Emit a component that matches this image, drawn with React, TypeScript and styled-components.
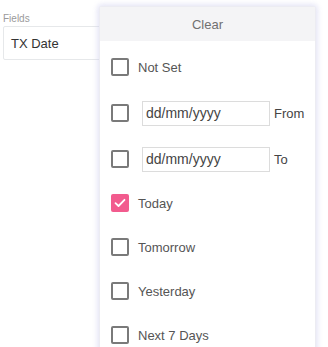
import styled, { createGlobalStyle } from "styled-components";

const GlobalStyle = createGlobalStyle`
  html, body {
    margin: 0;
    padding: 0;
    background: #ffffff;
    font-family: "Liberation Sans", Arial, sans-serif;
    overflow: hidden;
  }
`;

const Page = styled.div`
  position: relative;
  width: 328px;
  height: 347px;
  overflow: hidden;
`;

const Field = styled.div`
  padding: 13px 0 0 3px;
  display: flex;
  flex-direction: column;
`;

const FieldLabel = styled.div`
  font-size: 10px;
  line-height: 12px;
  color: #9a9a9a;
  margin-bottom: 1px;
`;

const FieldBox = styled.div`
  width: 140px;
  height: 32px;
  border: 1px solid #e6e8ea;
  border-radius: 2px;
  display: flex;
  align-items: center;
  padding-left: 7px;
  font-size: 13px;
  color: #333;
`;

const Dropdown = styled.div`
  position: absolute;
  left: 99px;
  top: 6px;
  width: 217px;
  height: 360px;
  background: #fff;
  border: 1px solid #ececf2;
  border-radius: 3px;
  box-shadow: 0 0 5px 2px rgba(200, 200, 235, 0.45);
  box-sizing: border-box;
`;

const Header = styled.div`
  height: 34px;
  background: #f4f4f6;
  display: flex;
  align-items: center;
  justify-content: center;
  font-size: 13px;
  color: #707070;
`;

const List = styled.div`
  padding-top: 4px;
  display: flex;
  flex-direction: column;
`;

const Row = styled.div<{ tall?: boolean }>`
  height: ${(p) => (p.tall ? "48px" : "44px")};
  display: flex;
  align-items: center;
  padding-left: 11px;
`;

const Box = styled.div<{ checked?: boolean }>`
  width: 18px;
  height: 18px;
  box-sizing: border-box;
  border-radius: 2px;
  border: ${(p) => (p.checked ? "none" : "2px solid #7a7a7a")};
  background: ${(p) => (p.checked ? "#f25b8e" : "#fff")};
  display: flex;
  align-items: center;
  justify-content: center;
  flex-shrink: 0;
`;

const Label = styled.span`
  margin-left: 9px;
  font-size: 13px;
  color: #555;
`;

const DateInput = styled.div`
  margin-left: 13px;
  width: 128px;
  height: 25px;
  box-sizing: border-box;
  border: 1px solid #dcdcdc;
  display: flex;
  align-items: center;
  padding-left: 3px;
  font-size: 14px;
  color: #444;
`;

const Suffix = styled.span`
  margin-left: 4px;
  font-size: 13px;
  color: #444;
`;

const Check = () => (
  <svg width="12" height="10" viewBox="0 0 12 10">
    <path d="M1.5 5.2 L4.5 8 L10.5 1.8" fill="none" stroke="#fff" strokeWidth="1.8" strokeLinecap="round" strokeLinejoin="round" />
  </svg>
);

const options = [
  { label: "Today", checked: true },
  { label: "Tomorrow" },
  { label: "Yesterday" },
  { label: "Next 7 Days" },
];

export default function App() {
  return (
    <>
      <GlobalStyle />
      <Page>
        <Field>
          <FieldLabel>Fields</FieldLabel>
          <FieldBox>TX Date</FieldBox>
        </Field>
        <Dropdown>
          <Header>Clear</Header>
          <List>
            <Row>
              <Box />
              <Label>Not Set</Label>
            </Row>
            <Row tall>
              <Box />
              <DateInput>dd/mm/yyyy</DateInput>
              <Suffix>From</Suffix>
            </Row>
            <Row>
              <Box />
              <DateInput>dd/mm/yyyy</DateInput>
              <Suffix>To</Suffix>
            </Row>
            {options.map((o) => (
              <Row key={o.label}>
                <Box checked={o.checked}>{o.checked && <Check />}</Box>
                <Label>{o.label}</Label>
              </Row>
            ))}
          </List>
        </Dropdown>
      </Page>
    </>
  );
}
